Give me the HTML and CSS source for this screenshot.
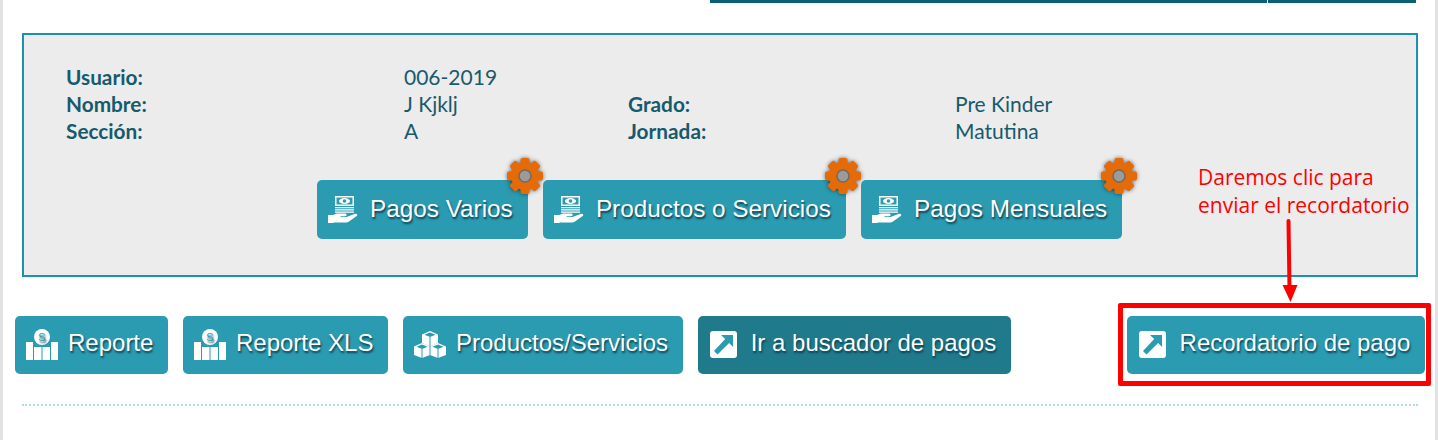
FILE: index.html
```html
<!DOCTYPE html>
<html lang="es">
<head>
  <meta charset="UTF-8" />
  <title>Recordatorio de pago</title>
  <link rel="stylesheet" href="styles.css">
</head>
<body>
  <svg class="sprites" aria-hidden="true">
    <symbol id="i-pay" viewBox="0 0 32 27">
      <path fill="#fff" d="M7 0h19v10H7z"/>
      <path fill="#2a9bb1" d="M8.500 1.500h16v7h-16z"/>
      <ellipse cx="16.500" cy="5" rx="5.500" ry="3" fill="#fff"/>
      <circle cx="16.500" cy="5" r="1.800" fill="#2a9bb1"/>
      <path fill="#fff" d="M7 11h19v1.300H7zM7 13.200h19v1.300H7zM7 15.400h19v1.300H7z"/>
      <path fill="#fff" d="M0 19h5l4-1.500h8c2 0 2.500 2.600 0 2.800h-4.500v.7h6l8-3c2-.7 3.500 .8 2.500 1.800l-8 5.700c-1 .7-2 1-3.500 1H6l-1 .5H0z"/>
    </symbol>
    <symbol id="i-chart" viewBox="0 0 32 31">
      <path fill="#fff" d="M0 13h7v18H0zM8 18h7.500v13H8zM16.500 18H24v13h-7.500zM25 13h7v18h-7z"/>
      <circle cx="16" cy="8" r="9" fill="#2a9bb1"/>
      <circle cx="16" cy="8" r="8" fill="#fff"/>
      <text x="16" y="11.500" class="coin">S</text>
    </symbol>
    <symbol id="i-cubes" viewBox="0 0 32 27">
      <path fill="#fff" d="M16 0l8 3.500V12l-8 3.500L8 12V3.500z"/>
      <path fill="#fff" d="M8 12l8 3.500V24l-8 3-8-3v-8.500z"/>
      <path fill="#fff" d="M24 12l8 3.500V24l-8 3-8-3v-8.500z"/>
      <path fill="#2a9bb1" d="M16 1.500l5.500 2.300L16 6 10.500 3.800zM8 13.500l5.500 2.200L8 18l-5.500-2.300zM24 13.500l5.500 2.200L24 18l-5.500-2.300z"/>
      <path stroke="#2a9bb1" stroke-width="1" fill="none" d="M16 6v9.500M8 18v9M24 18v9M16 15.500V24"/>
    </symbol>
    <symbol id="i-out" viewBox="0 0 27 27">
      <rect width="27" height="27" rx="3" fill="#fff"/>
      <path fill="#2a9bb1" d="M11 4h12v12l-3.900-3.900L7.500 23.500 4 20 15.200 8z"/>
    </symbol>
    <symbol id="i-gear" viewBox="0 0 38 38">
      <g fill="#e56b08">
        <rect x="14.500" y="1" width="9" height="36" rx="2"/>
        <rect x="14.500" y="1" width="9" height="36" rx="2" transform="rotate(45 19 19)"/>
        <rect x="14.500" y="1" width="9" height="36" rx="2" transform="rotate(90 19 19)"/>
        <rect x="14.500" y="1" width="9" height="36" rx="2" transform="rotate(135 19 19)"/>
      </g>
      <circle cx="19" cy="19" r="10" fill="#9b9b9b" stroke="#e56b08" stroke-width="8"/>
      <circle cx="19" cy="19" r="6" fill="none" stroke="#6e6a66" stroke-width="1.500"/>
    </symbol>
  </svg>

  <div class="page">
    <div class="top-tabs">
      <span class="tab tab-wide"></span>
      <span class="tab tab-small"></span>
    </div>

    <section class="panel">
      <div class="info">
        <b>Usuario:</b><span>006-2019</span><b></b><span></span>
        <b>Nombre:</b><span>J Kjklj</span><b>Grado:</b><span>Pre Kinder</span>
        <b>Sección:</b><span>A</span><b>Jornada:</b><span>Matutina</span>
      </div>
      <div class="pay-row">
        <a class="btn"><svg class="ico ico-pay"><use href="#i-pay"/></svg>Pagos Varios<svg class="gear"><use href="#i-gear"/></svg></a>
        <a class="btn"><svg class="ico ico-pay"><use href="#i-pay"/></svg>Productos o Servicios<svg class="gear"><use href="#i-gear"/></svg></a>
        <a class="btn"><svg class="ico ico-pay"><use href="#i-pay"/></svg>Pagos Mensuales<svg class="gear"><use href="#i-gear"/></svg></a>
      </div>
    </section>

    <div class="actions">
      <a class="btn"><svg class="ico ico-chart"><use href="#i-chart"/></svg>Reporte</a>
      <a class="btn"><svg class="ico ico-chart"><use href="#i-chart"/></svg>Reporte XLS</a>
      <a class="btn"><svg class="ico ico-pay"><use href="#i-cubes"/></svg>Productos/Servicios</a>
      <a class="btn btn-dark"><svg class="ico ico-out"><use href="#i-out"/></svg>Ir a buscador de pagos</a>
      <a class="btn btn-last"><svg class="ico ico-out"><use href="#i-out"/></svg>Recordatorio de pago</a>
    </div>

    <div class="dotted"></div>

    <!-- Annotation on top of the screenshot -->
    <p class="note">Daremos clic para<br>enviar el recordatorio</p>
    <svg class="note-arrow" viewBox="0 0 20 84">
      <path d="M8.500 2l1 68" stroke="#f00" stroke-width="4" stroke-linecap="round" fill="none"/>
      <path d="M2.500 66h15L10.500 83z" fill="#f00"/>
    </svg>
    <div class="note-box"></div>
  </div>
</body>
</html>
```

FILE: styles.css
```css
/* Reset */
* {
  margin: 0;
  padding: 0;
  box-sizing: border-box;
}

body {
  background: #fff;
  font-family: 'Lato', sans-serif;
  overflow: hidden;
}

.sprites {
  display: none;
}

.page {
  position: relative;
  height: 440px;
  border-left: 3px solid #e2e2e2;
  border-right: 3px solid #e2e2e2;
}

/* Top tabs */
.top-tabs {
  display: flex;
  justify-content: flex-end;
  gap: 1px;
  height: 3px;
  padding-right: 19px;
}

.tab {
  background: #0b6174;
}

.tab-wide {
  width: 557px;
}

.tab-small {
  width: 148px;
}

/* Student panel */
.panel {
  width: 1396px;
  height: 244px;
  margin: 30px 0 39px 19px;
  padding: 28px 42px 0;
  background: #ececec;
  border: 2px solid #1a94ad;
}

.info {
  display: grid;
  grid-template-columns: 338px 224px 327px 1fr;
  grid-auto-rows: 27px;
  align-items: center;
  font-size: 21px;
  color: #175a6c;
}

.info b {
  font-weight: 700;
  font-size: 20.800px;
}

.pay-row {
  display: flex;
  gap: 15px;
  margin: 36px 0 0 251px;
}

/* Buttons */
.btn {
  position: relative;
  display: flex;
  align-items: center;
  gap: 10px;
  height: 59px;
  padding: 0 14.600px 4px 11px;
  background: #2a9bb1;
  border-radius: 5px;
  color: #fff;
  font-family: 'Liberation Sans', sans-serif;
  font-size: 24px;
  white-space: nowrap;
  text-shadow: 1px 2px 2px #0c3f4d;
}

.pay-row .btn {
  padding: 0 15.200px 2px 11px;
  font-size: 24.300px;
}

.btn-dark {
  background: #1f7a8c;
}

.btn-last {
  margin-left: auto;
  margin-right: 10px;
}

.ico {
  flex: none;
  width: 32px;
}

.ico-pay {
  height: 27px;
  margin-top: 2px;
}

.ico-chart {
  height: 31px;
  margin-top: 3px;
}

.ico-out {
  width: 27px;
  height: 27px;
  margin: 3px 4px 0 1px;
}

.coin {
  font-family: 'Liberation Sans', sans-serif;
  font-size: 11px;
  text-anchor: middle;
  fill: #2a9bb1;
}

.gear {
  position: absolute;
  top: -23px;
  right: -16px;
  width: 38px;
  height: 38px;
  filter: drop-shadow(0 0 2px rgba(0, 0, 0, 0.55));
}

.actions {
  display: flex;
  gap: 15px;
  margin-left: 12px;
}

.actions .btn {
  height: 58px;
}

.dotted {
  width: 1396px;
  margin: 30px 0 0 19px;
  border-top: 2px dotted #b5d9e3;
}

/* Annotation */
.note {
  position: absolute;
  top: 163px;
  left: 1195px;
  font-family: 'Open Sans', sans-serif;
  font-size: 21px;
  line-height: 28px;
  color: #f00;
}

.note-arrow {
  position: absolute;
  top: 219px;
  left: 1277px;
  width: 20px;
  height: 84px;
}

.note-box {
  position: absolute;
  top: 303px;
  left: 1115px;
  width: 313px;
  height: 83px;
  border: 5px solid #f00;
  border-radius: 2px;
}
```
